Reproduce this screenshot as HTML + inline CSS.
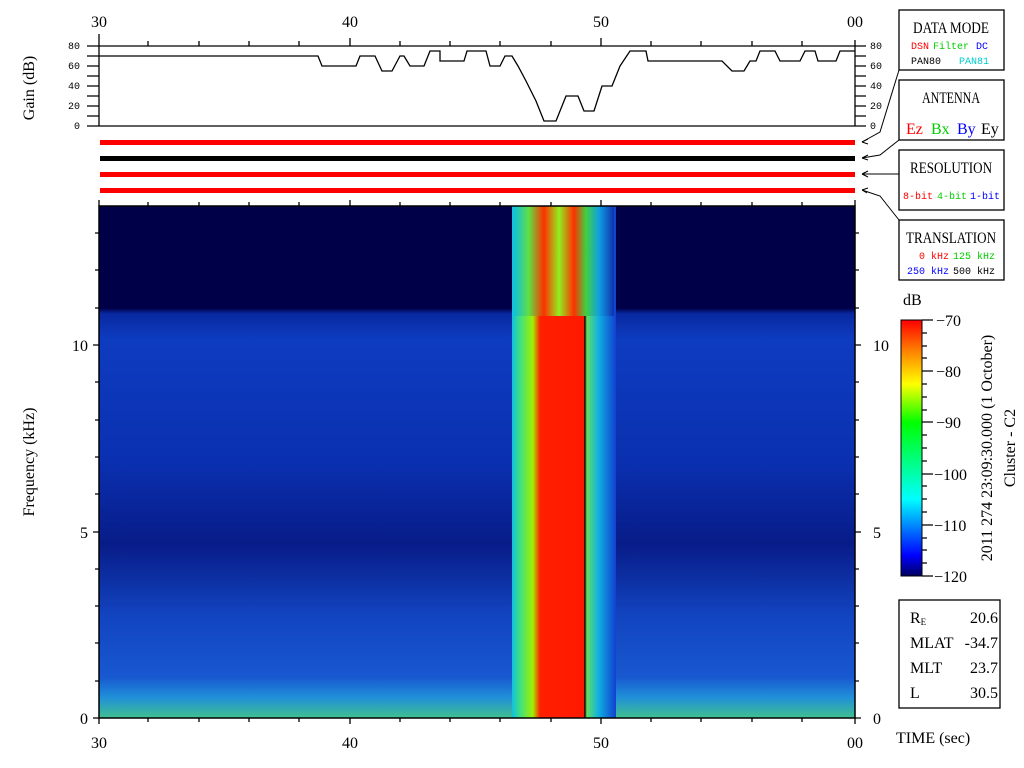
<!DOCTYPE html>
<html><head><meta charset="utf-8"><style>
html,body{margin:0;padding:0;background:#fff;width:1024px;height:768px;overflow:hidden}
svg{display:block}
.t{font-family:"Liberation Serif",serif;font-size:16px}
.m{font-family:"Liberation Mono",monospace;font-size:10px}
</style></head><body>
<svg width="1024" height="768" viewBox="0 0 1024 768" xmlns="http://www.w3.org/2000/svg">
<defs>
<linearGradient id="bg" x1="0" y1="0" x2="0" y2="1">
<stop offset="0" stop-color="#000048"/>
<stop offset="0.2" stop-color="#000048"/>
<stop offset="0.21" stop-color="#0828a0"/>
<stop offset="0.26" stop-color="#0e3cc0"/>
<stop offset="0.5" stop-color="#0a30b0"/>
<stop offset="0.66" stop-color="#081c88"/>
<stop offset="0.8" stop-color="#1244c0"/>
<stop offset="0.92" stop-color="#1858d0"/>
<stop offset="0.96" stop-color="#2090d8"/>
<stop offset="1" stop-color="#40c090"/>
</linearGradient>
<linearGradient id="burst" x1="0" y1="0" x2="1" y2="0">
<stop offset="0" stop-color="#10c0e0"/>
<stop offset="0.08" stop-color="#40e080"/>
<stop offset="0.2" stop-color="#a0f000"/>
<stop offset="0.27" stop-color="#ff2000"/>
<stop offset="0.69" stop-color="#ff1800"/>
<stop offset="0.70" stop-color="#000000"/>
<stop offset="0.72" stop-color="#60e060"/>
<stop offset="0.83" stop-color="#10b0e0"/>
<stop offset="1" stop-color="#1040d0"/>
</linearGradient>
<linearGradient id="burstTop" x1="0" y1="0" x2="1" y2="0">
<stop offset="0" stop-color="#10c0e0"/>
<stop offset="0.15" stop-color="#60e040"/>
<stop offset="0.3" stop-color="#ff3000"/>
<stop offset="0.45" stop-color="#90f020"/>
<stop offset="0.6" stop-color="#ff3000"/>
<stop offset="0.72" stop-color="#40d040"/>
<stop offset="0.85" stop-color="#10a0e0"/>
<stop offset="1" stop-color="#1030b0"/>
</linearGradient>
<linearGradient id="cb" x1="0" y1="1" x2="0" y2="0">
<stop offset="0" stop-color="#000060"/>
<stop offset="0.08" stop-color="#0000ff"/>
<stop offset="0.3" stop-color="#00ffff"/>
<stop offset="0.45" stop-color="#00ff80"/>
<stop offset="0.6" stop-color="#00ff00"/>
<stop offset="0.75" stop-color="#ffff00"/>
<stop offset="0.88" stop-color="#ff8000"/>
<stop offset="1" stop-color="#ff0000"/>
</linearGradient>
</defs>

<!-- spectrogram -->
<rect x="99" y="206" width="756" height="512" fill="url(#bg)"/>
<rect x="512" y="206" width="104" height="512" fill="url(#burst)"/>
<rect x="514" y="206" width="100" height="110" fill="url(#burstTop)"/>
<rect x="99" y="206" width="756" height="512" fill="none" stroke="#000" stroke-width="1.5"/>

<g stroke="#000" stroke-width="1.3">
<path d="M99 206v-6M148 206v-4M199 206v-4M249 206v-4M299 206v-4M350 206v-6M400 206v-4M450 206v-4M500 206v-4M551 206v-4M601 206v-6M651 206v-4M701 206v-4M752 206v-4M802 206v-4M855 206v-6"/>
<path d="M99 718v6M148 718v4M199 718v4M249 718v4M299 718v4M350 718v6M400 718v4M450 718v4M500 718v4M551 718v4M601 718v6M651 718v4M701 718v4M752 718v4M802 718v4M855 718v6"/>
<path d="M99 718h-6M99 681h-4M99 643h-4M99 606h-4M99 569h-4M99 532h-6M99 494h-4M99 457h-4M99 420h-4M99 382h-4M99 345h-6M99 308h-4M99 270h-4M99 233h-4"/>
<path d="M855 718h6M855 681h4M855 643h4M855 606h4M855 569h4M855 532h6M855 494h4M855 457h4M855 420h4M855 382h4M855 345h6M855 308h4M855 270h4M855 233h4"/>
</g>
<g class="t" text-anchor="middle">
<text x="99" y="748">30</text><text x="350" y="748">40</text><text x="601" y="748">50</text><text x="855" y="748">00</text>
<text x="99" y="27">30</text><text x="350" y="27">40</text><text x="601" y="27">50</text><text x="855" y="27">00</text>
</g>
<g class="t" text-anchor="end">
<text x="88" y="724">0</text><text x="88" y="538">5</text><text x="88" y="351">10</text>
</g>
<g class="t">
<text x="873" y="724">0</text><text x="873" y="538">5</text><text x="873" y="351">10</text>
</g>
<text class="t" transform="translate(34 462) rotate(-90)" text-anchor="middle">Frequency (kHz)</text>

<!-- gain panel -->
<g stroke="#000" stroke-width="1.3" fill="none">
<path d="M87 46H866M87 126H866M99 34V126M855 40V126"/>
<path d="M148 46v-5M199 46v-5M249 46v-5M299 46v-5M350 46v-8M400 46v-5M450 46v-5M500 46v-5M551 46v-5M601 46v-8M651 46v-5M701 46v-5M752 46v-5M802 46v-5"/>
<path d="M87 56h12M87 66h12M87 76h12M87 86h12M87 96h12M87 106h12M87 116h12M855 56h11M855 66h11M855 76h11M855 86h11M855 96h11M855 106h11M855 116h11"/>
<polyline points="99,56 318,56 322,66 356,66 360,56 375,56 382,71 392,71 400,56 404,56 410,66 424,66 430,51 440,51 440,61 464,61 467,51 486,51 490,66 500,66 505,56 512,56 518,66 526,81 536,101 544,121 556,121 566,96 578,96 584,111 594,111 602,86 612,86 620,66 630,51 646,51 648,61 718,61 722,61 732,71 744,71 750,61 756,61 760,51 775,51 780,61 800,61 805,51 815,51 818,61 836,61 840,51 855,51"/>
</g>
<g class="m" text-anchor="end">
<text x="80" y="49">80</text><text x="80" y="69">60</text><text x="80" y="89">40</text><text x="80" y="109">20</text><text x="80" y="129">0</text>
</g>
<g class="m">
<text x="870" y="49">80</text><text x="870" y="69">60</text><text x="870" y="89">40</text><text x="870" y="109">20</text><text x="870" y="129">0</text>
</g>
<text class="t" transform="translate(34 88) rotate(-90)" text-anchor="middle">Gain (dB)</text>

<rect x="100" y="140" width="755" height="5" fill="#f00"/>
<rect x="100" y="156" width="755" height="5" fill="#000"/>
<rect x="100" y="172" width="755" height="5" fill="#f00"/>
<rect x="100" y="188" width="755" height="5" fill="#f00"/>

<g stroke="#000" stroke-width="1" fill="none">
<path d="M899 70L880 132L862 142"/>
<path d="M899 140L880 155L862 158"/>
<path d="M899 174H862"/>
<path d="M899 220L880 196L862 190"/>
<path d="M862 142l6-3M862 142l6 2M862 158l6-3M862 158l6 2M862 174l6-3M862 174l6 3M862 190l6-2M862 190l5 3"/>
</g>

<g fill="#fff" stroke="#000" stroke-width="1.3">
<rect x="899" y="10" width="105" height="60"/>
<rect x="899" y="80" width="105" height="60"/>
<rect x="899" y="150" width="105" height="60"/>
<rect x="899" y="220" width="105" height="60"/>
<rect x="899" y="600" width="101" height="108"/>
</g>
<g class="t" font-size="15">
<text x="913" y="33" textLength="76" lengthAdjust="spacingAndGlyphs">DATA MODE</text>
<text x="922" y="103" textLength="58" lengthAdjust="spacingAndGlyphs">ANTENNA</text>
<text x="910" y="173" textLength="82" lengthAdjust="spacingAndGlyphs">RESOLUTION</text>
<text x="906" y="243" textLength="90" lengthAdjust="spacingAndGlyphs">TRANSLATION</text>
</g>
<g class="m">
<text x="911" y="49" fill="#f00">DSN</text><text x="933" y="49" fill="#0c0">Filter</text><text x="976" y="49" fill="#00f">DC</text>
<text x="911" y="64" fill="#000">PAN80</text><text x="959" y="64" fill="#0cc">PAN81</text>
<text x="903" y="199" fill="#f00">8-bit</text><text x="937" y="199" fill="#0c0">4-bit</text><text x="970" y="199" fill="#00f">1-bit</text>
<text x="919" y="259" fill="#f00">0 kHz</text><text x="953" y="259" fill="#0c0">125 kHz</text>
<text x="907" y="274" fill="#00f">250 kHz</text><text x="953" y="274" fill="#000">500 kHz</text>
</g>
<g class="t" font-size="16">
<text x="906" y="134" fill="#f00">Ez</text><text x="931" y="134" fill="#0c0">Bx</text><text x="957" y="134" fill="#00f">By</text><text x="981" y="134" fill="#000">Ey</text>
</g>

<rect x="901" y="320" width="21" height="256" fill="url(#cb)" stroke="#000" stroke-width="1"/>
<g stroke="#000" stroke-width="1.2">
<path d="M922 320h11M922 371h11M922 422h11M922 474h11M922 525h11M922 576h11"/>
<path d="M922 333h5M922 346h5M922 358h5M922 384h5M922 397h5M922 410h5M922 435h5M922 448h5M922 461h5M922 486h5M922 499h5M922 512h5M922 538h5M922 550h5M922 563h5"/>
</g>
<g class="t">
<text x="903" y="305">dB</text>
<text x="936" y="326">−70</text><text x="936" y="377">−80</text><text x="936" y="428">−90</text>
<text x="934" y="480">−100</text><text x="934" y="531">−110</text><text x="934" y="582">−120</text>
</g>
<text class="t" transform="translate(992 448) rotate(-90)" text-anchor="middle">2011 274 23:09:30.000 (1 October)</text>
<text class="t" transform="translate(1015 448) rotate(-90)" text-anchor="middle">Cluster - C2</text>

<g class="t">
<text x="910" y="623">R<tspan font-size="9" dy="2">E</tspan></text>
<text x="910" y="648">MLAT</text><text x="910" y="673">MLT</text><text x="910" y="698">L</text>
</g>
<g class="t" text-anchor="end">
<text x="998" y="623">20.6</text><text x="998" y="648">-34.7</text><text x="998" y="673">23.7</text><text x="998" y="698">30.5</text>
</g>
<text class="t" x="896" y="743">TIME (sec)</text>
</svg>
</body></html>
